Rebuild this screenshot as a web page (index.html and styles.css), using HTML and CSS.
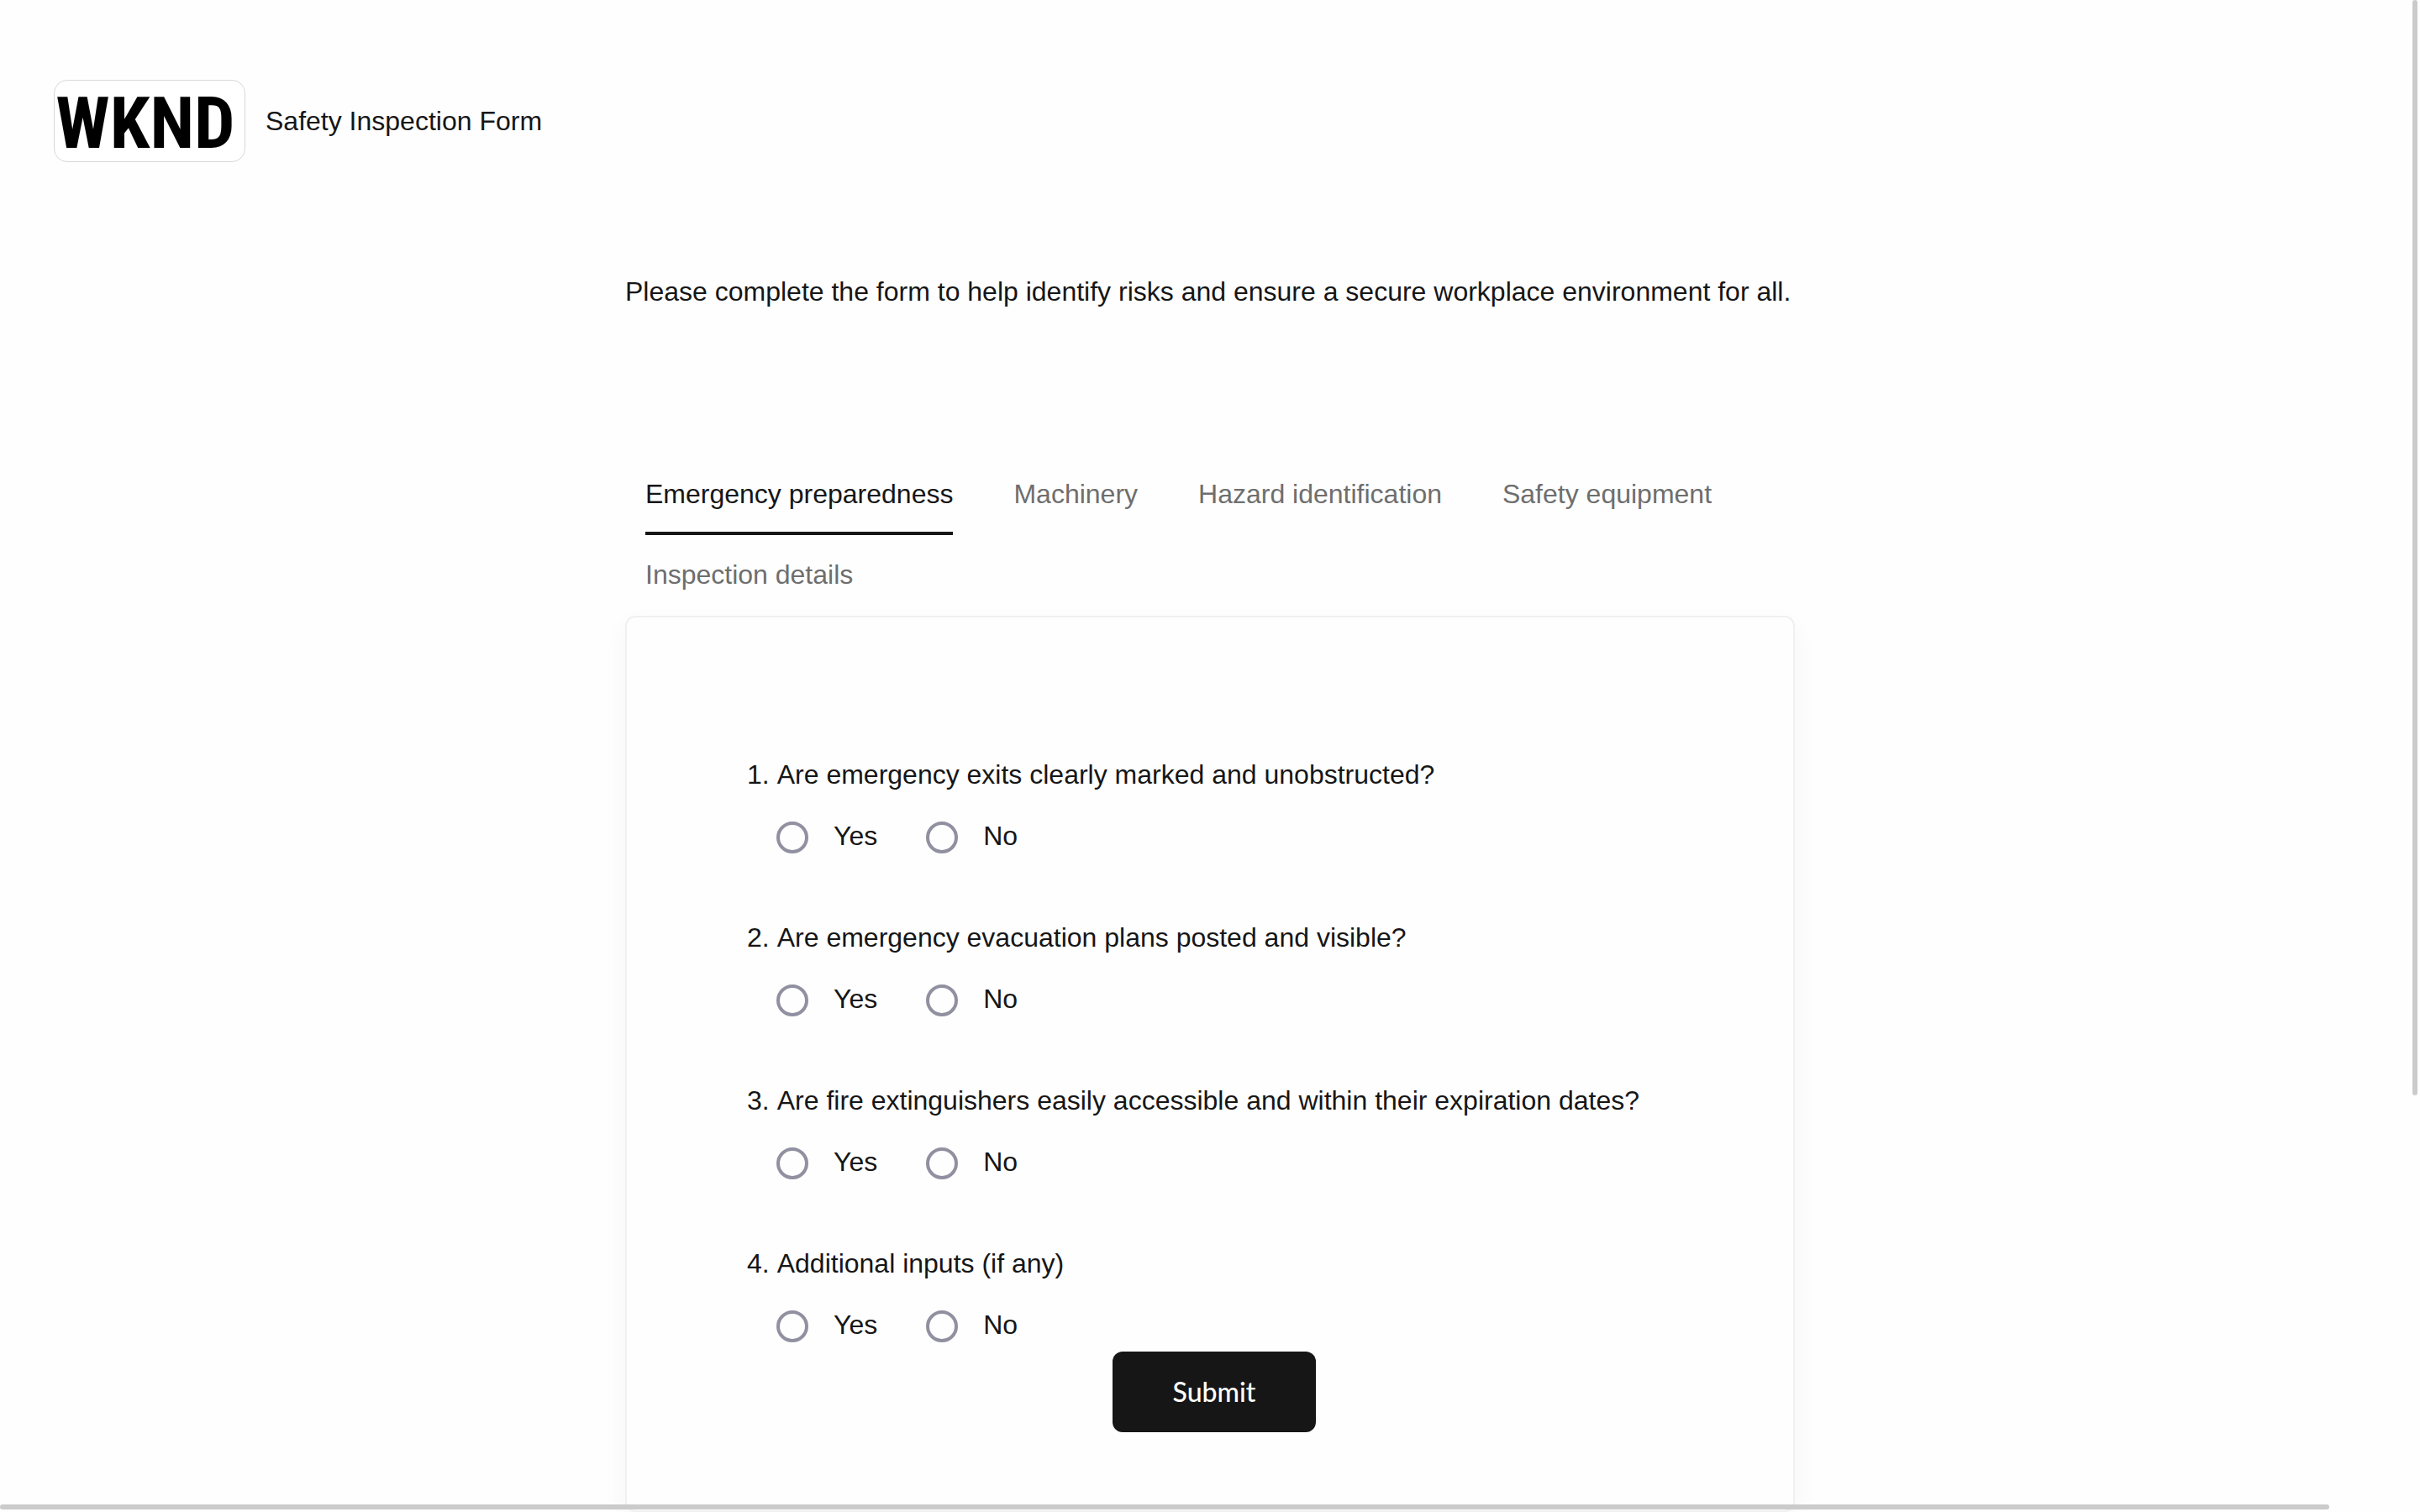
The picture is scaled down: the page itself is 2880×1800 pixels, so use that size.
FILE: index.html
```html
<!DOCTYPE html>
<html lang="en">
<head>
<meta charset="utf-8">
<title>Safety Inspection Form</title>
<link rel="stylesheet" href="styles.css">
</head>
<body>
<header class="header">
  <div class="logo"><svg class="logo-art" viewBox="0 0 226 96" role="img" aria-label="WKND"><text class="logo-text" x="108" y="80" text-anchor="middle">WKND</text></svg></div>
  <h1 class="title">Safety Inspection Form</h1>
</header>
<main class="main">
  <p class="intro">Please complete the form to help identify risks and ensure a secure workplace environment for all.</p>
  <nav class="tabs">
    <a class="tab tab-active" href="#emergency" aria-current="true">Emergency preparedness</a>
    <a class="tab" href="#machinery">Machinery</a>
    <a class="tab" href="#hazard">Hazard identification</a>
    <a class="tab" href="#equipment">Safety equipment</a>
    <a class="tab" href="#details">Inspection details</a>
  </nav>
  <form class="card" id="emergency">
    <fieldset class="question">
      <legend class="legend"><span>1.</span><span>Are emergency exits clearly marked and unobstructed?</span></legend>
      <div class="options">
        <label class="option"><input class="radio" type="radio" name="q1" value="yes">Yes</label>
        <label class="option"><input class="radio" type="radio" name="q1" value="no">No</label>
      </div>
    </fieldset>
    <fieldset class="question">
      <legend class="legend"><span>2.</span><span>Are emergency evacuation plans posted and visible?</span></legend>
      <div class="options">
        <label class="option"><input class="radio" type="radio" name="q2" value="yes">Yes</label>
        <label class="option"><input class="radio" type="radio" name="q2" value="no">No</label>
      </div>
    </fieldset>
    <fieldset class="question">
      <legend class="legend"><span>3.</span><span>Are fire extinguishers easily accessible and within their expiration dates?</span></legend>
      <div class="options">
        <label class="option"><input class="radio" type="radio" name="q3" value="yes">Yes</label>
        <label class="option"><input class="radio" type="radio" name="q3" value="no">No</label>
      </div>
    </fieldset>
    <fieldset class="question">
      <legend class="legend"><span>4.</span><span>Additional inputs (if any)</span></legend>
      <div class="options">
        <label class="option"><input class="radio" type="radio" name="q4" value="yes">Yes</label>
        <label class="option"><input class="radio" type="radio" name="q4" value="no">No</label>
      </div>
    </fieldset>
    <button class="submit" type="submit">Submit</button>
  </form>
</main>
<div class="scroll scroll-y"></div>
<div class="scroll scroll-x"></div>
</body>
</html>
```
FILE: styles.css
```css
* { box-sizing: border-box; }

html { overflow: hidden; }

body {
  margin: 0;
  background: #fefefe;
  color: #161616;
  font: 32px/48px "Liberation Sans", Arial, sans-serif;
}

.header {
  display: flex;
  align-items: center;
  gap: 24px;
  padding: 95px 64px 0;
}

.logo {
  width: 228px;
  height: 98px;
  border: 1px solid #d8d8d8;
  border-radius: 16px;
  background: #fff;
}

.logo-art { display: block; width: 100%; height: 100%; overflow: visible; }

.logo-text {
  font: bold 86px "Liberation Sans Narrow", "Roboto Condensed", "DejaVu Sans Condensed", sans-serif;
  fill: #000;
}

.title { margin: 0; font-size: 32px; font-weight: 400; }

.main { max-width: 1392px; margin: 0 auto; padding-top: 130px; }

.intro { margin: 0; }

.tabs {
  display: flex;
  flex-wrap: wrap;
  column-gap: 72px;
  margin-top: 170px;
  padding: 0 24px;
}

.tab {
  padding: 23px 0 21px;
  border-bottom: 4px solid transparent;
  color: #6e6e6e;
  text-decoration: none;
}

.tab-active { border-color: #161616; color: #161616; }

.card {
  display: flex;
  flex-direction: column;
  gap: 73px;
  padding: 163px 133px 93px 143px;
  border: 2px solid #f0f0f0;
  border-radius: 12px;
  background: #fefefe;
  box-shadow: 0 12px 32px rgba(0, 0, 0, 0.04);
}

.question { margin: 0; padding: 0; border: 0; }

.legend { display: flex; gap: 9px; padding: 0; }

.options {
  display: flex;
  gap: 58px;
  padding: 25px 0 0 35px;
}

.option { display: flex; align-items: center; gap: 30px; }

.radio {
  appearance: none;
  width: 38px;
  height: 38px;
  margin: 4px 0 0;
  border: 4px solid #9190a0;
  border-radius: 50%;
}

.submit {
  align-self: center;
  margin-top: -65px;
  padding: 24px 72px;
  border: 0;
  border-radius: 12px;
  background: #161616;
  color: #fff;
  font: 500 32px/48px Lato, sans-serif;
}

.scroll { position: fixed; border-radius: 3px; background: #cbcbcb; }

.scroll-y { top: 0; right: 3px; width: 6px; height: 1304px; }

.scroll-x { bottom: 3px; left: 0; width: 2772px; height: 6px; }
```
